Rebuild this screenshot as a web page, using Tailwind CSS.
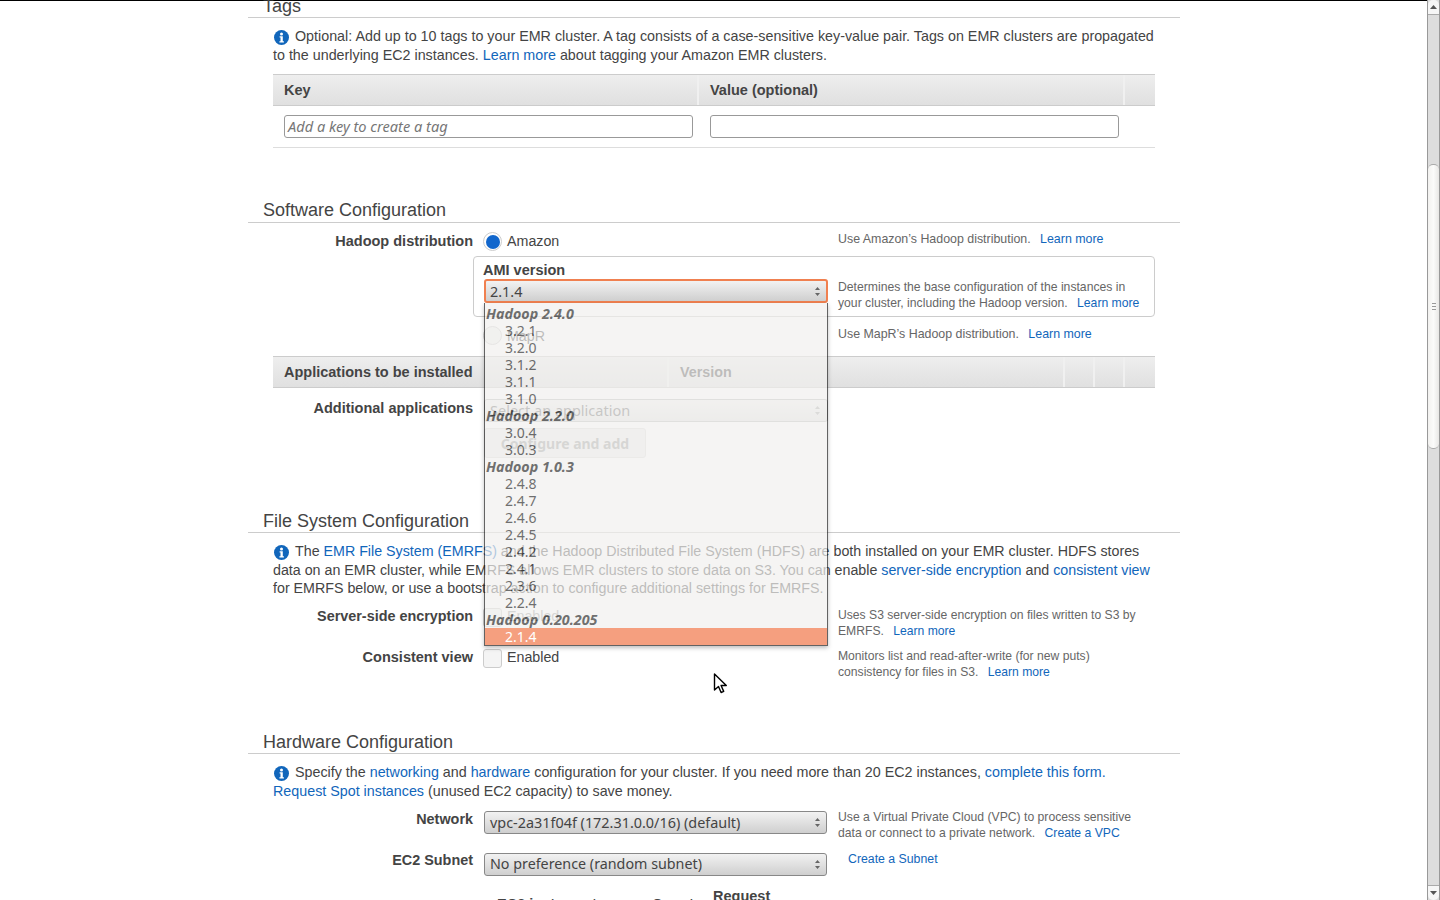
<!DOCTYPE html>
<html lang="en">
<head>
<meta charset="UTF-8">
<title>Create Cluster</title>
<script src="https://cdn.jsdelivr.net/npm/@tailwindcss/browser@4"></script>
</head>
<body class="h-[900px] overflow-hidden bg-white text-[14.25px] leading-[18.5px] text-[#444] font-['Liberation_Sans',Arial,sans-serif]">
<div class="relative h-[900px] flex">
  <main class="flex-1 min-w-0 overflow-hidden">
    <div class="h-px bg-black"></div>
    <div class="w-[932px] ml-[248px]">

      <!-- Tags -->
      <h2 class="h-[17px] flex items-end pl-[15px] text-[18px] leading-[22px] border-b border-[#ccc] whitespace-nowrap">Tags</h2>
      <div class="ml-[25px] w-[882px]">
        <p class="pt-[9px] h-[46px] -mr-[4px] text-[14.3px]"><svg class="inline-block w-[15px] h-[15px] ml-px mr-[6px] align-[-4px]" viewBox="0 0 15 15"><circle cx="7.5" cy="7.5" r="7.5" fill="#1166bb"/><circle cx="7.5" cy="3.9" r="1.5" fill="#fff"/><path d="M5.6 6.2h3.2v5h1.1v1.3H5.4v-1.3h1.1V7.5h-.9z" fill="#fff"/></svg>Optional: Add up to 10 tags to your EMR cluster. A tag consists of a case-sensitive key-value pair. Tags on EMR clusters are propagated to the underlying EC2 instances. <a class="text-[#1166bb]">Learn more</a> about tagging your Amazon EMR clusters.</p>
        <div class="mt-[10px] h-[32px] flex text-[14.5px] font-bold border-y border-[#ccc] bg-gradient-to-b from-[#eee] to-[#e0e0e0]">
          <div class="w-[426px] pl-[11px] leading-[31px] border-r-2 border-[#f0f0f0]">Key</div>
          <div class="w-[426px] pl-[11px] leading-[31px] border-r-2 border-[#f0f0f0]">Value (optional)</div>
          <div class="flex-1"></div>
        </div>
        <div class="h-[42px] flex pt-[9px] border-b border-[#ddd]">
          <div class="ml-[11px] w-[409px] h-[23px] rounded-[3px] border border-[#999] px-[3px] text-[14.6px] leading-[21px] italic text-[#777] font-['Noto_Sans',sans-serif]">Add a key to create a tag</div>
          <div class="ml-[17px] w-[409px] h-[23px] rounded-[3px] border border-[#999]"></div>
        </div>
      </div>

      <!-- Software Configuration -->
      <h2 class="mt-[52px] h-[23px] pb-px flex items-end pl-[15px] text-[18px] leading-[22px] border-b border-[#ccc]">Software Configuration</h2>
      <div class="ml-[25px] w-[882px]">
        <div class="h-[34px] flex pt-[9px]">
          <div class="w-[200px] text-right text-[14.5px] font-bold">Hadoop distribution</div>
          <div class="ml-[10px] w-[345px] flex items-start gap-[5px]">
            <span class="w-[19px] h-[19px] rounded-full border border-[#ccc] bg-white p-[1.5px]"><span class="block w-full h-full rounded-full bg-[#1166cc]"></span></span>
            <span>Amazon</span>
          </div>
          <div class="ml-[10px] -mt-px text-[12.4px] leading-[16px] text-[#666] whitespace-nowrap">Use Amazon’s Hadoop distribution. <a class="ml-[6px] text-[#1166bb]">Learn more</a></div>
        </div>
        <div class="ml-[200px] h-[61px] -mt-px rounded-[4px] border border-[#ccc] flex">
          <div class="ml-[10px] w-[344px] pt-[4px]">
            <div class="-ml-px h-[18px] leading-[18px] text-[14.5px] font-bold">AMI version</div>
            <div class="h-[24px] pt-[2px] rounded-[3px] border-2 border-[#f08050] bg-gradient-to-b from-[#f2f2f2] to-[#cfcfcf] pl-[4px] pr-[4px] flex items-center justify-between text-[14.4px] font-['Noto_Sans',sans-serif]">
              <span>2.1.4</span>
              <svg class="-mt-[2px] w-[9px] h-[11px]" viewBox="0 0 9 11"><path d="M4.5 1l2.5 3h-5zM4.5 10l2.5-3h-5z" fill="#666"/></svg>
            </div>
          </div>
          <div class="ml-[10px] mt-[22px] w-[308px] text-[12.2px] leading-[16px] text-[#666]">Determines the base configuration of the instances in your cluster, including the Hadoop version. <a class="ml-[6px] whitespace-nowrap text-[#1166bb]">Learn more</a></div>
        </div>
        <div class="h-[39px] flex pt-[9px]">
          <div class="w-[200px]"></div>
          <div class="ml-[10px] w-[345px] flex items-start gap-[5px]">
            <span class="w-[19px] h-[19px] rounded-full border border-[#ccc] bg-[#f4f4f4]"></span>
            <span class="mt-[1px]">MapR</span>
          </div>
          <div class="ml-[10px] text-[12.4px] leading-[16px] text-[#666] whitespace-nowrap">Use MapR’s Hadoop distribution. <a class="ml-[6px] text-[#1166bb]">Learn more</a></div>
        </div>
        <div class="h-[32px] flex text-[14.5px] font-bold border-y border-[#ccc] bg-gradient-to-b from-[#eee] to-[#e0e0e0]">
          <div class="w-[396px] pl-[11px] leading-[31px] border-r-2 border-[#f0f0f0]">Applications to be installed</div>
          <div class="w-[396px] pl-[11px] leading-[31px] text-[14.3px] border-r-2 border-[#f0f0f0]">Version</div>
          <div class="w-[30px] border-r-2 border-[#f0f0f0]"></div>
          <div class="w-[30px] border-r-2 border-[#f0f0f0]"></div>
          <div class="flex-1"></div>
        </div>
        <div class="flex pt-[11px] h-[122px]">
          <div class="w-[200px] text-right text-[14.5px] font-bold">Additional applications</div>
          <div class="ml-[11px] w-[344px]">
            <div class="h-[23px] pb-px rounded-[3px] border border-[#bbb] bg-gradient-to-b from-[#f4f4f4] to-[#e4e4e4] pl-[5px] pr-[5px] flex items-center justify-between text-[14.5px] text-[#666] font-['Noto_Sans',sans-serif]">
              <span>Select an application</span>
              <svg class="w-[9px] h-[11px]" viewBox="0 0 9 11"><path d="M4.5 1l2.5 3h-5zM4.5 10l2.5-3h-5z" fill="#aaa"/></svg>
            </div>
            <div class="mt-[6px] w-[162px] h-[30px] rounded-[3px] border border-[#ddd] bg-[#eee] text-center text-[14px] font-bold leading-[30px] text-[#999] font-['Noto_Sans',sans-serif]">Configure and add</div>
          </div>
        </div>
      </div>

      <!-- File System Configuration -->
      <h2 class="h-[23px] flex items-end pl-[15px] text-[18px] leading-[22px] border-b border-[#ccc]">File System Configuration</h2>
      <div class="ml-[25px] w-[882px]">
        <p class="pt-[9px] h-[74px]"><svg class="inline-block w-[15px] h-[15px] ml-px mr-[6px] align-[-4px]" viewBox="0 0 15 15"><circle cx="7.5" cy="7.5" r="7.5" fill="#1166bb"/><circle cx="7.5" cy="3.9" r="1.5" fill="#fff"/><path d="M5.6 6.2h3.2v5h1.1v1.3H5.4v-1.3h1.1V7.5h-.9z" fill="#fff"/></svg>The <a class="text-[#1166bb]">EMR File System (EMRFS)</a> and the Hadoop Distributed File System (HDFS) are both installed on your EMR cluster. HDFS stores data on an EMR cluster, while EMRFS allows EMR clusters to store data on S3. You can enable <a class="text-[#1166bb]">server-side encryption</a> and <a class="text-[#1166bb]">consistent view</a> for EMRFS below, or use a bootstrap action to configure additional settings for EMRFS.</p>
        <div class="h-[41px] flex">
          <div class="w-[200px] text-right text-[14.4px] font-bold">Server-side encryption</div>
          <div class="ml-[10px] w-[345px] flex items-start gap-[5px]">
            <span class="mt-px w-[19px] h-[19px] rounded-[3px] border border-[#ccc] bg-[#f4f4f4]"></span>
            <span class="text-[#999]">Enabled</span>
          </div>
          <div class="ml-[10px] w-[310px] text-[12.15px] leading-[16px] text-[#666]">Uses S3 server-side encryption on files written to S3 by EMRFS. <a class="ml-[6px] text-[#1166bb]">Learn more</a></div>
        </div>
        <div class="h-[83px] flex">
          <div class="w-[200px] text-right text-[14.5px] font-bold">Consistent view</div>
          <div class="ml-[10px] w-[345px] flex items-start gap-[5px]">
            <span class="mt-px w-[19px] h-[19px] rounded-[3px] border border-[#ccc] bg-[#f4f4f4]"></span>
            <span>Enabled</span>
          </div>
          <div class="ml-[10px] w-[300px] text-[12.15px] leading-[16px] text-[#666]">Monitors list and read-after-write (for new puts) consistency for files in S3. <a class="ml-[6px] text-[#1166bb]">Learn more</a></div>
        </div>
      </div>

      <!-- Hardware Configuration -->
      <h2 class="h-[23px] flex items-end pl-[15px] text-[18px] leading-[22px] border-b border-[#ccc]">Hardware Configuration</h2>
      <div class="ml-[25px] w-[882px]">
        <p class="pt-[9px] h-[57px] text-[14.31px]"><svg class="inline-block w-[15px] h-[15px] ml-px mr-[6px] align-[-4px]" viewBox="0 0 15 15"><circle cx="7.5" cy="7.5" r="7.5" fill="#1166bb"/><circle cx="7.5" cy="3.9" r="1.5" fill="#fff"/><path d="M5.6 6.2h3.2v5h1.1v1.3H5.4v-1.3h1.1V7.5h-.9z" fill="#fff"/></svg>Specify the <a class="text-[#1166bb]">networking</a> and <a class="text-[#1166bb]">hardware</a> configuration for your cluster. If you need more than 20 EC2 instances, <a class="text-[#1166bb]">complete this form.</a> <a class="text-[#1166bb]">Request Spot instances</a> (unused EC2 capacity) to save money.</p>
        <div class="h-[42px] flex">
          <div class="w-[200px] -mt-px text-right text-[14.4px] font-bold">Network</div>
          <div class="ml-[11px] w-[343px] mr-px h-[23px] pt-[2px] rounded-[3px] border border-[#888] bg-gradient-to-b from-[#f2f2f2] to-[#cfcfcf] pl-[5px] pr-[4px] flex items-center justify-between text-[14.4px] font-['Noto_Sans',sans-serif]">
            <span>vpc-2a31f04f (172.31.0.0/16) (default)</span>
            <svg class="-mt-[2px] w-[9px] h-[11px]" viewBox="0 0 9 11"><path d="M4.5 1l2.5 3h-5zM4.5 10l2.5-3h-5z" fill="#666"/></svg>
          </div>
          <div class="ml-[10px] -mt-[2px] w-[310px] text-[12.2px] leading-[16px] text-[#666]">Use a Virtual Private Cloud (VPC) to process sensitive data or connect to a private network. <a class="ml-[6px] text-[#1166bb]">Create a VPC</a></div>
        </div>
        <div class="h-[34px] flex">
          <div class="w-[200px] -mt-[2px] text-right text-[14.4px] font-bold">EC2 Subnet</div>
          <div class="ml-[11px] w-[343px] mr-px h-[23px] rounded-[3px] border border-[#888] bg-gradient-to-b from-[#f2f2f2] to-[#cfcfcf] pl-[5px] pr-[4px] flex items-center justify-between text-[14.3px] font-['Noto_Sans',sans-serif]">
            <span>No preference (random subnet)</span>
            <svg class="w-[9px] h-[11px]" viewBox="0 0 9 11"><path d="M4.5 1l2.5 3h-5zM4.5 10l2.5-3h-5z" fill="#666"/></svg>
          </div>
          <a class="ml-[20px] -mt-px text-[12.3px] leading-[14px] text-[#1166bb]">Create a Subnet</a>
        </div>
        <div class="flex text-[14.5px] font-bold whitespace-nowrap">
          <div class="ml-[224px] w-[155px] pt-[8px]">EC2 instance type</div>
          <div class="w-[61px] pt-[8px]">Count</div>
          <div>Request</div>
        </div>
      </div>
    </div>
  </main>

  <!-- browser scrollbar -->
  <div class="w-[13px] h-[900px] flex flex-col border-x border-[#999] bg-[#ddd]">
    <div class="h-[15px] bg-[#f6f6f6] rounded-t-[5px] border-b border-[#aaa] flex items-center justify-center">
      <svg class="w-[7px] h-[4px]" viewBox="0 0 7 4"><path d="M3.5 0l3.5 4h-7z" fill="#555"/></svg>
    </div>
    <div class="h-[149px]"></div>
    <div class="h-[285px] rounded-[5px] border-y border-[#aaa] bg-gradient-to-r from-[#f2f1ef] via-[#fbfbfa] to-[#e8e7e5] flex flex-col items-center justify-center gap-[2px]">
      <span class="block w-[4px] h-px bg-[#999]"></span><span class="block w-[4px] h-px bg-[#999]"></span><span class="block w-[4px] h-px bg-[#999]"></span>
    </div>
    <div class="flex-1"></div>
    <div class="h-[15px] bg-[#f6f6f6] rounded-b-[5px] border-t border-[#aaa] flex items-center justify-center">
      <svg class="w-[7px] h-[4px]" viewBox="0 0 7 4"><path d="M3.5 4l3.5-4h-7z" fill="#555"/></svg>
    </div>
  </div>

  <!-- open select menu, fading in -->
  <div class="absolute left-[484px] top-[303px] w-[344px] h-[343px] opacity-70 border border-t-0 border-[#222] bg-[#f1f0ee] shadow-[0_2px_4px_rgba(0,0,0,.35)] text-[14px] leading-[17px] text-[#333] font-['Noto_Sans',sans-serif]">
    <div class="pt-[2px] pl-px text-[14.3px] font-bold italic">Hadoop 2.4.0</div>
    <div class="pl-[20px]">3.2.1</div>
    <div class="pl-[20px]">3.2.0</div>
    <div class="pl-[20px]">3.1.2</div>
    <div class="pl-[20px]">3.1.1</div>
    <div class="pl-[20px]">3.1.0</div>
    <div class="pl-px text-[14.3px] font-bold italic">Hadoop 2.2.0</div>
    <div class="pl-[20px]">3.0.4</div>
    <div class="pl-[20px]">3.0.3</div>
    <div class="pl-px text-[14.3px] font-bold italic">Hadoop 1.0.3</div>
    <div class="pl-[20px]">2.4.8</div>
    <div class="pl-[20px]">2.4.7</div>
    <div class="pl-[20px]">2.4.6</div>
    <div class="pl-[20px]">2.4.5</div>
    <div class="pl-[20px]">2.4.2</div>
    <div class="pl-[20px]">2.4.1</div>
    <div class="pl-[20px]">2.3.6</div>
    <div class="pl-[20px]">2.2.4</div>
    <div class="pl-px text-[14.3px] font-bold italic">Hadoop 0.20.205</div>
    <div class="pl-[20px] bg-[#f1774a] text-white">2.1.4</div>
  </div>

  <!-- mouse pointer -->
  <svg class="absolute left-[713px] top-[673px] w-[15px] h-[22px]" viewBox="0 0 15 22"><path d="M1.5 1v16l4-3.5 2.6 6 2.6-1.1-2.6-5.9h5.2z" fill="#fff" stroke="#000" stroke-width="1.4" stroke-linejoin="round"/></svg>
</div>
</body>
</html>
